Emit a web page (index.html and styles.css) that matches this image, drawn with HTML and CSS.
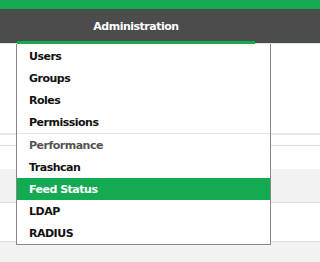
FILE: index.html
```html
<!DOCTYPE html>
<html>
<head>
<meta charset="utf-8">
<link rel="stylesheet" href="styles.css">
</head>
<body>
<div class="topbar"></div>
<nav class="nav">
  <div class="tab">Administration</div>
</nav>
<main class="page">
  <div class="blk white h89"></div>
  <div class="blk white h10 line2"></div>
  <div class="blk white h23 line1"></div>
  <div class="blk gray h33"></div>
  <div class="blk white h38 line1"></div>
  <div class="blk gray fill line1"></div>
</main>
<ul class="menu">
  <li class="item">Users</li>
  <li class="item">Groups</li>
  <li class="item">Roles</li>
  <li class="item sep">Permissions</li>
  <li class="item muted">Performance</li>
  <li class="item">Trashcan</li>
  <li class="item active">Feed Status</li>
  <li class="item">LDAP</li>
  <li class="item">RADIUS</li>
</ul>
</body>
</html>
```
FILE: styles.css
```css
html, body {
  margin: 0;
  padding: 0;
  height: 100%;
}
body {
  font-family: "DejaVu Sans", Verdana, sans-serif;
  font-size: 11px;
  letter-spacing: -0.5px;
  background: #f2f2f2;
  position: relative;
  overflow: hidden;
}
.topbar {
  height: 9px;
  background: #13aa52;
}
.nav {
  height: 34px;
  background: #4c4c4c;
  border-bottom: 1px solid #d4e3f7;
  display: flex;
  align-items: flex-start;
}
.tab {
  margin-left: 17px;
  width: 238px;
  height: 29px;
  padding-top: 3px;
  border-bottom: 3px solid #13aa52;
  box-sizing: content-box;
  display: flex;
  align-items: center;
  justify-content: center;
  color: #fff;
  font-weight: bold;
  margin-bottom: -1px;
  position: relative;
  z-index: 1;
}
.page {
  display: flex;
  flex-direction: column;
}
.blk { flex: none; }
.white { background: #fff; }
.gray { background: #f2f2f2; }
.h89 { height: 89px; }
.h10 { height: 10px; }
.h23 { height: 23px; }
.h33 { height: 33px; }
.h38 { height: 38px; }
.fill { height: 18px; }
.line2 { border-top: 2px solid #e6e6e6; }
.line1 { border-top: 1px solid #dedede; }
.menu {
  position: absolute;
  top: 44px;
  left: 16px;
  width: 253px;
  margin: 0;
  padding: 1px 0 0 0;
  list-style: none;
  background: #fff;
  border: 1px solid #888;
  border-top: none;
  z-index: 2;
}
.item {
  height: 21px;
  padding-top: 1px;
  line-height: 22px;
  padding-left: 12px;
  font-weight: bold;
  color: #111;
}
.sep {
  border-bottom: 1px solid #e3e3e3;
}
.muted { color: #555; }
.active {
  background: #13aa52;
  color: #fff;
}
```
